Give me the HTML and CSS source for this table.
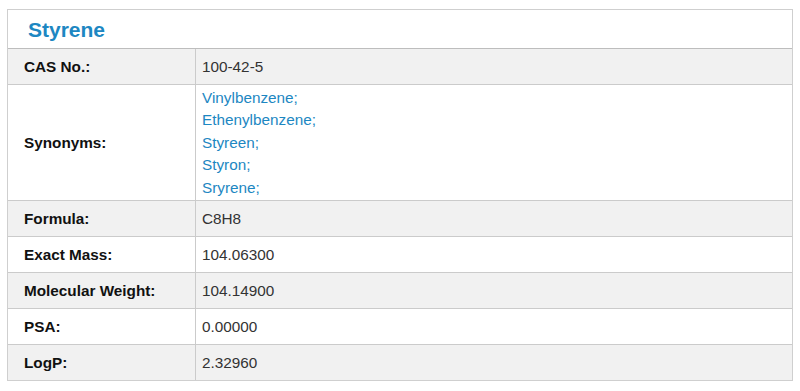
FILE: index.html
```html
<!DOCTYPE html>
<html>
<head>
<meta charset="utf-8">
<link rel="stylesheet" href="styles.css">
</head>
<body>
<div class="box">
  <h1 class="title">Styrene</h1>
  <table class="props">
    <tr class="alt"><th>CAS No.:</th><td>100-42-5</td></tr>
    <tr><th>Synonyms:</th><td class="syn">
      <a>Vinylbenzene;</a>
      <a>Ethenylbenzene;</a>
      <a>Styreen;</a>
      <a>Styron;</a>
      <a>Sryrene;</a>
    </td></tr>
    <tr class="alt"><th>Formula:</th><td>C8H8</td></tr>
    <tr><th>Exact Mass:</th><td>104.06300</td></tr>
    <tr class="alt"><th>Molecular Weight:</th><td>104.14900</td></tr>
    <tr><th>PSA:</th><td>0.00000</td></tr>
    <tr class="alt"><th>LogP:</th><td>2.32960</td></tr>
  </table>
</div>
</body>
</html>
```
FILE: styles.css
```css
html, body {
  margin: 0;
  padding: 0;
  background: #fff;
}
body {
  font-family: "Liberation Sans", Arial, sans-serif;
  color: #222;
}
.box {
  margin: 9px 0 0 7px;
  width: 786px;
  border: 1px solid #cfcfcf;
  box-sizing: border-box;
}
.title {
  margin: 0;
  height: 38px;
  line-height: 40px;
  padding-left: 20px;
  font-size: 21px;
  font-weight: bold;
  color: #1d87c2;
  border-bottom: 1px solid #bdbdbd;
}
.props {
  width: 100%;
  border-collapse: collapse;
  font-size: 15.3px;
}
.props th, .props td {
  border-top: 1px solid #cbcbcb;
  padding: 0;
  height: 35px;
  vertical-align: middle;
}
.props tr:first-child th, .props tr:first-child td {
  border-top: none;
}
.props th {
  width: 171px;
  text-align: left;
  padding-left: 16px;
  font-weight: bold;
  color: #111;
  border-right: 1px solid #cbcbcb;
}
.props td {
  padding-left: 6px;
  color: #333;
}
.props tr.alt {
  background: #f1f1f1;
}
.syn {
  padding-top: 2px !important;
  padding-bottom: 1px !important;
}
.syn a {
  display: block;
  color: #1d87c2;
  line-height: 22.4px;
}
```
